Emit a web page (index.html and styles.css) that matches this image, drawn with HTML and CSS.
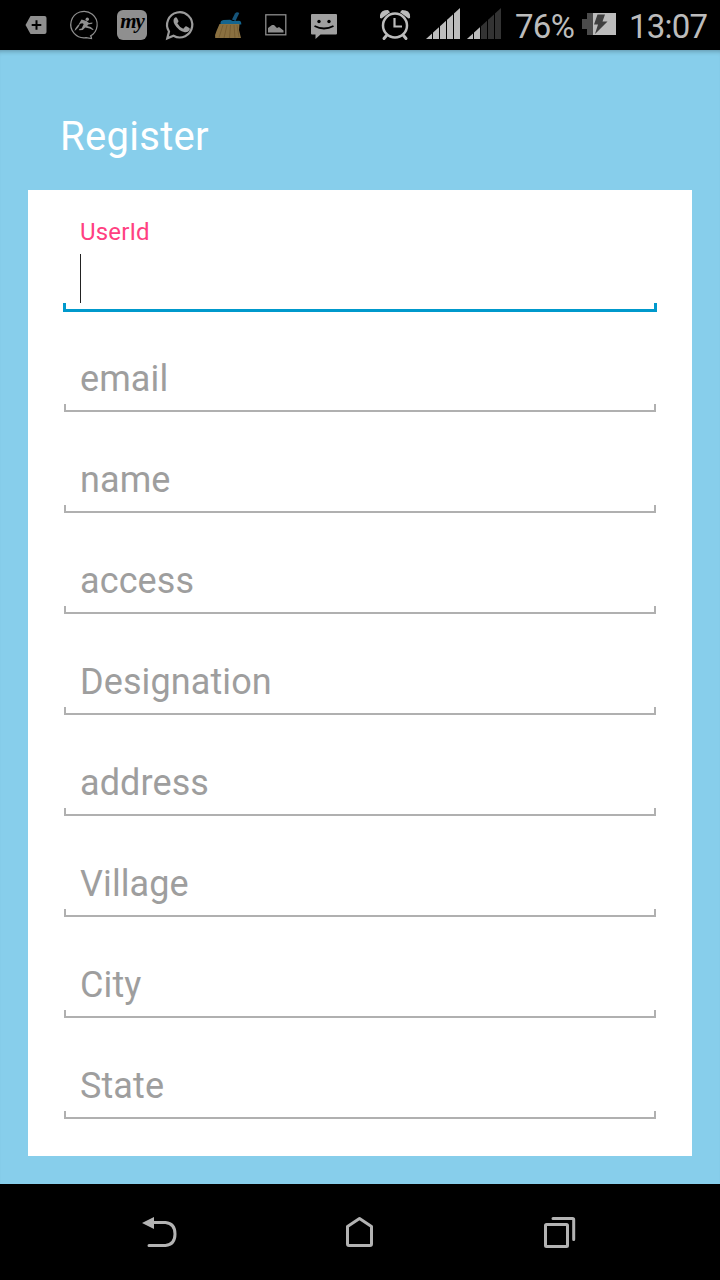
FILE: index.html
```html
<!DOCTYPE html>
<html lang="en">
<head>
<meta charset="utf-8">
<title>Register</title>
<link rel="stylesheet" href="styles.css">
</head>
<body>
<div class="screen">
  <header class="status">
    <div class="notices">
      <svg class="notice" viewBox="0 0 48 50"><path d="M18.500 16H32.500a2 2 0 0 1 2 2V32a2 2 0 0 1-2 2H18.500l-5-9z" fill="#8f8f8f"/><path d="M24.500 20.200v9.600M19.700 25h9.600" stroke="#000" stroke-width="2"/></svg>
      <svg class="notice" viewBox="0 0 48 50"><path d="M30 36.300A13.200 13.200 0 1 0 26 37.600L31.500 38.500L31 35.800" fill="none" stroke="#8f8f8f" stroke-width="1.200"/><circle cx="27.300" cy="19.300" r="1.700" fill="#8f8f8f"/><path d="M21.500 19.500l5 1.500 2.500 2 3.500-.5-.3 1.300-4 .7-1 1.500 3.500 1 3 2.500-1 .5-3-1.500-4.500-1-2.500 2.500-3.500.3 0-1.200 2.500-.6 2-4.500-1.500-.8-3.500 1z" fill="#8f8f8f"/><path d="M14.500 31q1-4.500 5.500-7.500-1 4-5.500 7.500z" fill="#8f8f8f"/></svg>
      <span class="notice my"><span class="my-tile">my</span></span>
      <svg class="notice" viewBox="0 0 48 50"><path d="M11.300 38.300l1.700-6.800A12.600 12.600 0 1 1 17.500 35.800z" fill="none" stroke="#9b9b9b" stroke-width="2.200"/><path d="M18.500 18q1.500-1.500 2.500 0l1.500 3q.2.800-1.200 2.200 2 3.800 6 5.500l2-2.100q.7-.5 1.500 0l2.500 1.300q1 .6.300 2-1.500 2.700-4.800 2.300-6.500-1.500-10.300-8-2-3.700 0-6.200z" fill="#9b9b9b"/></svg>
      <svg class="notice" viewBox="0 0 48 50"><path d="M28 19.500l3-6q1.800-2 4.300-.5L31.500 21z" fill="#16547a"/><path d="M16.500 24q-.5-3.500 3-4l6.500-.3 3 1.300 6-.3q2.500.3 2.300 3.800z" fill="#14658f"/><path d="M15.500 24h20l-.5 6 2 8H11.200q-.5-3.500 1.300-7z" fill="#8a7040"/><path d="M19 25l-4 12.500M23 25l-3 13M26.500 25l-1 13M30 25l1 13M33 25l2 12" fill="none" stroke="#6b532a" stroke-width=".6"/></svg>
      <svg class="notice" viewBox="0 0 48 50"><rect x="13.800" y="14.800" width="20" height="20" fill="none" stroke="#8d8d8d" stroke-width="1.300"/><path d="M16 32.500v-4.500l4-3 2 0 3 3 2-1 4.500 3.500v2z" fill="#8d8d8d"/></svg>
      <svg class="notice" viewBox="0 0 48 50"><path d="M12 14h24q1 0 1 1v18.500q0 1-1 1H20.500L15.500 39v-4.500H12q-1 0-1-1V15q0-1 1-1z" fill="#a0a0a0"/><circle cx="19" cy="21.500" r="1.700"/><circle cx="29" cy="21.500" r="1.700"/><path d="M14.500 26q9.500 5 19 0" fill="none" stroke="#000" stroke-width="1.800"/></svg>
    </div>
    <div class="system">
      <svg class="alarm" viewBox="0 0 32 50"><g fill="none" stroke="#bcbcbc"><circle cx="15" cy="25.500" r="12" stroke-width="2.500"/><path d="M14.500 18v8.500H22" stroke-width="2.200"/><path d="M6.500 35.500l-2.500 3M23.500 35.500l2.500 3" stroke-width="3" stroke-linecap="round"/></g><path d="M0 18q-1-8 8-8l2 2.200L1.500 18.500zM30 18q1-8-8-8l-2 2.200 8.500 6.300z" fill="#bcbcbc"/></svg>
      <svg class="signal" viewBox="0 0 35 50"><path d="M0 39L34 8v31z" fill="#bcbcbc"/><path d="M6.500 8v31M13.500 8v31M20.500 8v31M27.500 8v31" stroke="#000"/></svg>
      <svg class="signal second" viewBox="0 0 35 50"><path d="M0 39L34 8v31z" fill="#333"/><path d="M0 39L13.500 26.700V39z" fill="#bcbcbc"/><path d="M6.500 8v31M13.500 8v31M20.500 8v31M27.500 8v31" stroke="#000"/></svg>
      <span class="percent">76%</span>
      <svg class="battery" viewBox="0 0 34 50"><path d="M0 19h5v-6h8v22H5v-6H0z" fill="#4b4b4b"/><path d="M11 13h23v22H11z" fill="#bcbcbc"/><path d="M15.500 14.500h7.500L20.500 21.500H25.500L13 34l3-9.500h-4z" fill="#404040"/></svg>
      <span class="clock">13:07</span>
    </div>
  </header>
  <main class="page">
    <h1 class="title">Register</h1>
    <form class="card">
      <div class="field active"><label class="label">UserId</label><span class="cursor"></span></div>
      <div class="field"><span class="hint">email</span></div>
      <div class="field"><span class="hint">name</span></div>
      <div class="field"><span class="hint">access</span></div>
      <div class="field"><span class="hint">Designation</span></div>
      <div class="field"><span class="hint">address</span></div>
      <div class="field"><span class="hint">Village</span></div>
      <div class="field"><span class="hint">City</span></div>
      <div class="field"><span class="hint">State</span></div>
    </form>
  </main>
  <nav class="navbar">
    <svg class="nav-icon" viewBox="0 0 40 40"><path d="M2 9l12-6v12z" fill="#b3b3b3"/><path d="M12 8.500H25.500q9.500 1 9.500 11.500t-9.500 11.500H9" fill="none" stroke="#b3b3b3" stroke-width="3" stroke-linecap="round"/></svg>
    <svg class="nav-icon" viewBox="0 0 40 40"><path d="M19.500 4.500L31.500 12.500V30q0 1.500-1.500 1.500H9q-1.500 0-1.500-1.500V12.500z" fill="none" stroke="#b3b3b3" stroke-width="3" stroke-linejoin="round"/></svg>
    <svg class="nav-icon" viewBox="0 0 40 40"><rect x="5.500" y="10.500" width="22" height="22" rx="1" fill="none" stroke="#b3b3b3" stroke-width="3"/><path d="M13 4.500H32.500q1.200 0 1.200 1.200V25.500" fill="none" stroke="#b3b3b3" stroke-width="3" stroke-linecap="round"/></svg>
  </nav>
</div>
</body>
</html>
```
FILE: styles.css
```css
* { box-sizing: border-box; }
body { margin: 0; font-family: Roboto, "Noto Sans", sans-serif; }
.screen { width: 720px; height: 1280px; display: flex; flex-direction: column; background: #87ceeb; }

.status { height: 50px; flex: none; display: flex; background: #000; color: #bcbcbc; padding-left: 12px; }
.notices { display: flex; width: 368px; }
.notice { width: 48px; height: 50px; flex: none; }
.my { display: flex; align-items: center; justify-content: center; }
.my-tile { width: 30px; height: 30px; border-radius: 6px; background: #8f8f8f; color: #000; font: italic bold 21px/23px "Liberation Serif", serif; text-align: center; letter-spacing: -1px; }
.system { display: flex; font-size: 33px; line-height: 53px; white-space: nowrap; }
.alarm { width: 32px; height: 50px; margin-right: 14px; }
.signal { width: 35px; height: 50px; margin-right: 6px; }
.second { margin-right: 13px; }
.percent { width: 67px; letter-spacing: -.7px; }
.battery { width: 34px; height: 50px; margin-right: 13px; }
.clock { letter-spacing: -.8px; }

.page { flex: 1; padding: 0 28px; box-shadow: inset 0 5px 5px -4px rgba(0, 0, 0, .3); }
.title { margin: 0; height: 140px; padding: 63px 0 0 32px; color: #fff; font-size: 40px; line-height: 48px; font-weight: 400; letter-spacing: .3px; }
.card { height: 966px; padding: 21px 36px 0; background: #fff; }
.field { height: 101px; display: flex; flex-direction: column; justify-content: flex-end;
  background: linear-gradient(#b0b0b0, #b0b0b0) left bottom / 100% 2px no-repeat,
    linear-gradient(#b0b0b0, #b0b0b0) left bottom / 2px 8px no-repeat,
    linear-gradient(#b0b0b0, #b0b0b0) right bottom / 2px 8px no-repeat;
  padding: 0 16px 12px; }
.hint { font-size: 36px; line-height: 42px; color: #9e9e9e; letter-spacing: .1px; }
.active { margin: 0 -1px -1px; height: 101px; padding: 7px 17px 0; justify-content: flex-start;
  background: linear-gradient(#0099cc, #0099cc) left bottom / 100% 3px no-repeat,
    linear-gradient(#0099cc, #0099cc) left bottom / 3px 9px no-repeat,
    linear-gradient(#0099cc, #0099cc) right bottom / 3px 9px no-repeat; }
.label { font-size: 24px; line-height: 28px; color: #ff4081; letter-spacing: .15px; }
.cursor { width: 1px; height: 49px; margin-top: 8px; background: #222; }

.navbar { height: 96px; flex: none; background: #000; display: flex; justify-content: center; gap: 160px; padding-top: 30px; }
.nav-icon { width: 40px; height: 40px; }
```
